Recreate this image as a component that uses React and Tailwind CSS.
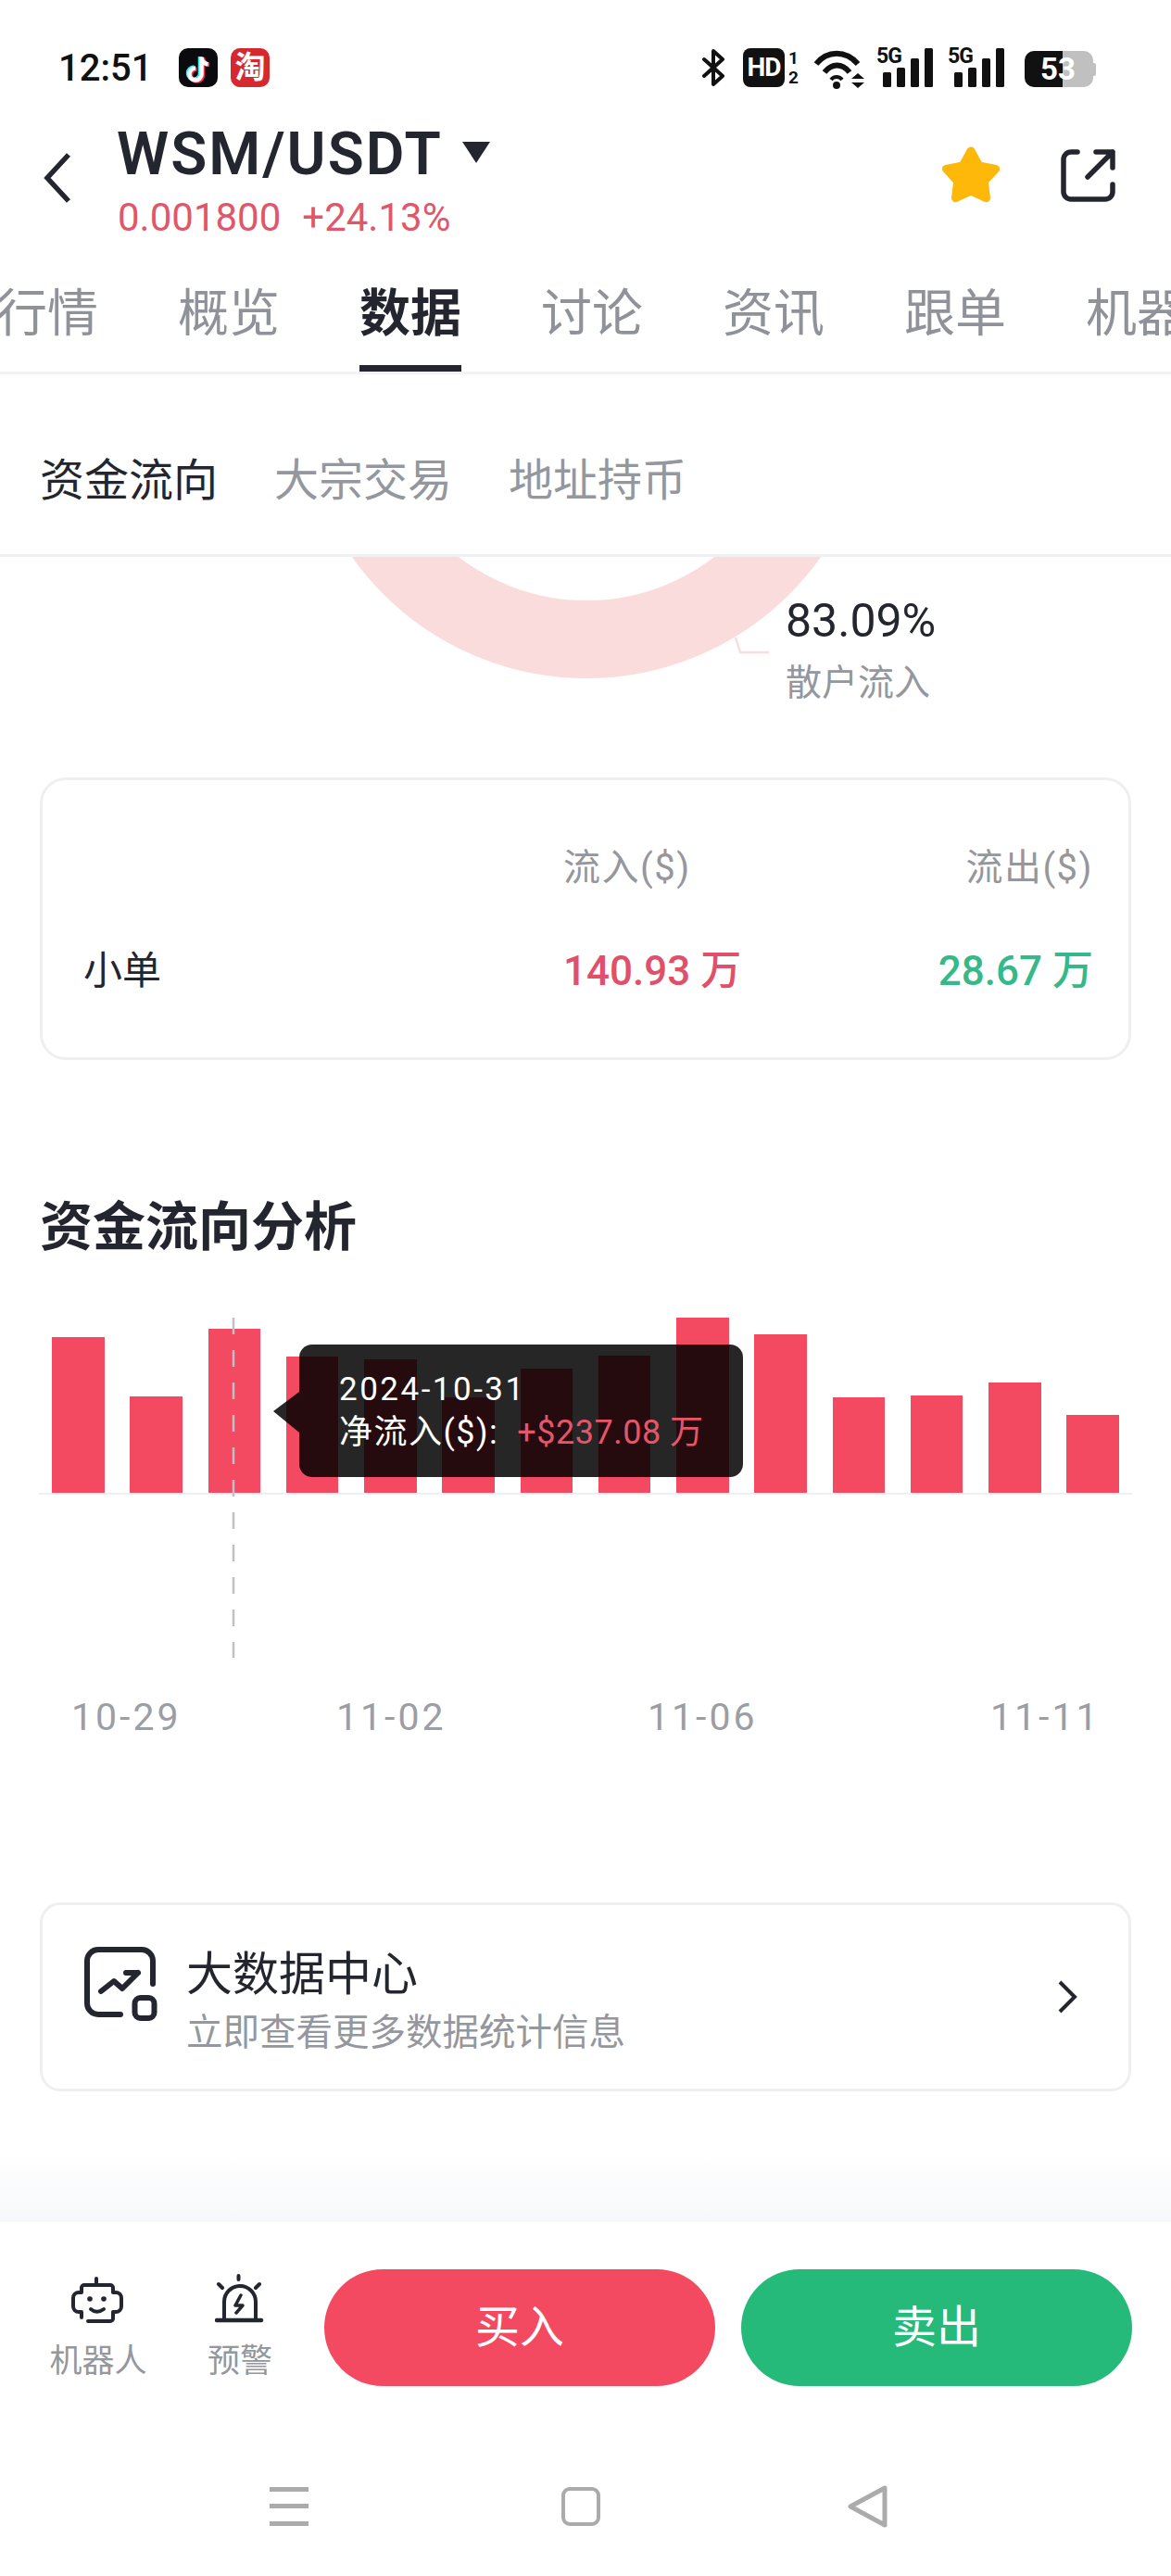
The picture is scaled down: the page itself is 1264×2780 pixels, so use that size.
import React from 'react';

const tabs = ['行情', '概览', '数据', '讨论', '资讯', '跟单', '机器人'];
const subTabs = ['资金流向', '大宗交易', '地址持币'];
// bar heights in px, read off the chart
const bars = [168, 104, 177, 147, 144, 103, 134, 148, 189, 171, 103, 105, 119, 84];

const Bluetooth = () => (
  <svg width="26" height="42" viewBox="0 0 26 42" fill="none" stroke="#111" strokeWidth="4" strokeLinejoin="round" strokeLinecap="round">
    <path d="M3 12 L23 30 L13 39 V3 L23 12 L3 30" />
  </svg>
);

const Wifi = () => (
  <svg width="58" height="46" viewBox="875 50 58 46" fill="none" stroke="#111" strokeWidth="6">
    <path d="M880 67 C892 52 912 52 925 67" />
    <path d="M889 76 C897 66 908 66 916 76" />
    <path d="M896 84 C899 80 905 80 908 84" strokeWidth="4" />
    <circle cx="902" cy="90" r="4" fill="#111" stroke="none" />
    <path d="M918 83 L925 77 L932 83 Z M918 87 L925 93 L932 87 Z" fill="#111" stroke="none" />
  </svg>
);

const Signal = () => (
  <div className="relative w-[62px] h-[43px]">
    <span className="absolute left-0 top-[-3px] text-[23px] leading-[24px] font-bold text-[#111] tracking-[-1px]">5G</span>
    <svg className="absolute left-0 top-0" width="62" height="43" viewBox="0 0 62 43" fill="#111">
      <rect x="7" y="26" width="9" height="16" rx="1.5" />
      <rect x="22" y="21" width="9" height="21" rx="1.5" />
      <rect x="37" y="11" width="9" height="31" rx="1.5" />
      <rect x="52" y="0" width="9" height="42" rx="1.5" />
    </svg>
  </div>
);

const TikTok = () => (
  <svg width="42" height="42" viewBox="0 0 42 42" fill="none" strokeWidth="4.5">
    <rect width="42" height="42" rx="10" fill="#0b0b0f" stroke="none" />
    <path d="M23 9 V27 a6.5 6.5 0 1 1 -6.5 -6.5 M23 9 c0 4 3 7.5 7 8" stroke="#25f4ee" />
    <path d="M26 10 V29 a6.5 6.5 0 1 1 -6.5 -6.5 M26 10 c0 4 3 7.5 7 8" stroke="#fe2c55" />
    <path d="M24.5 9.5 V28 a6.5 6.5 0 1 1 -6.5 -6.5 M24.5 9.5 c0 4 3 7.5 7 8" stroke="#fff" />
  </svg>
);

const Star = () => (
  <svg width="68" height="64" viewBox="0 0 68 64" fill="#fdb80a" stroke="#fdb80a" strokeWidth="9" strokeLinejoin="round">
    <polygon points="34,6 42.8,21.9 60.6,25.3 48.3,38.6 50.5,56.7 34,49 17.5,56.7 19.7,38.6 7.4,25.3 25.2,21.9" />
  </svg>
);

const Share = () => (
  <svg width="59" height="57" viewBox="0 0 59 57" fill="none" stroke="#23262e" strokeWidth="5.5" strokeLinecap="round" strokeLinejoin="round">
    <path d="M18 3 H11 a8 8 0 0 0 -8 8 V46 a8 8 0 0 0 8 8 H48 a8 8 0 0 0 8 -8 V38" />
    <path d="M38 3 H56 V20 M56 3 L29 30" />
  </svg>
);

const BigDataIcon = () => (
  <svg className="mb-[29px]" width="80" height="81" viewBox="0 0 80 81" fill="none" stroke="#23262e" strokeWidth="6" strokeLinecap="round" strokeLinejoin="round">
    <path d="M40 74 H16 a12 12 0 0 1 -12 -12 V16 a12 12 0 0 1 12 -12 H63 a12 12 0 0 1 12 12 V41" />
    <path d="M19 49 L33 38 L42 46 L59 29 M46 29 H59" />
    <rect x="55.5" y="56" width="21" height="22" rx="6" />
  </svg>
);

const Robot = () => (
  <svg width="62" height="56" viewBox="75 2452 62 56" fill="none" stroke="#23262e" strokeWidth="4" strokeLinecap="round" strokeLinejoin="round">
    <path d="M95 2503 H119 a3 3 0 0 0 3 -3 V2493 h3 a6 6 0 0 0 6 -6 V2478 a6 6 0 0 0 -6 -6 h-3 V2467 a3 3 0 0 0 -3 -3 H91 a3 3 0 0 0 -3 3 V2472 h-3 a6 6 0 0 0 -6 6 V2487 a6 6 0 0 0 6 6 h3 V2499" />
    <path d="M104 2457 V2463" />
    <circle cx="97" cy="2479" r="2.8" fill="#23262e" stroke="none" />
    <circle cx="112" cy="2479" r="2.8" fill="#23262e" stroke="none" />
    <path d="M98 2490 q 6.5 5.5 14 0" />
  </svg>
);

const Alarm = () => (
  <svg width="54" height="56" viewBox="233 2452 54 56" fill="none" stroke="#23262e" strokeWidth="4" strokeLinecap="round" strokeLinejoin="round">
    <path d="M243 2503 V2484 a17 17 0 0 1 34 0 V2503" />
    <path d="M235 2504 H283" strokeWidth="4.5" />
    <path d="M258.500 2456 V2460 M237 2465 L241 2469 M281 2465 L277 2469" />
    <path d="M261 2477 L255 2488 H263 L256 2496" strokeWidth="3.500" />
  </svg>
);

const App = () => {
  return (
    <div className="w-[1264px] h-[2780px] bg-white overflow-hidden font-['Roboto','Noto_Sans_CJK_SC',sans-serif] text-[#23262e]">
      {/* Status bar */}
      <div className="h-[120px] pt-[52px] flex items-start">
        <span className="ml-[63px] w-[130px] text-[40px] leading-[44px] font-medium text-[#111]">12:51</span>
        <TikTok />
        <div className="ml-[14px] w-[42px] h-[42px] rounded-[10px] bg-[#d6282f] flex items-center justify-center text-white text-[33px] leading-[42px] font-bold">淘</div>
        <div className="ml-[466px]"><Bluetooth /></div>
        <div className="ml-[19px] w-[45px] h-[42px] rounded-[8px] bg-[#111] flex items-center justify-center text-white text-[28px] leading-[42px] font-bold tracking-[-1px]">HD</div>
        <div className="ml-[4px] w-[12px] flex flex-col text-[19px] leading-[21px] font-bold text-[#111]">
          <span>1</span>
          <span>2</span>
        </div>
        <div className="ml-[13px]"><Wifi /></div>
        <div className="ml-[12px]"><Signal /></div>
        <div className="ml-[15px]"><Signal /></div>
        {/* Battery */}
        <div className="ml-[21px] mt-[3px] relative flex w-[78px] h-[39px]">
          <div className="w-[41px] h-full bg-[#111] rounded-l-[10px]" />
          <div className="w-[33px] h-full bg-[#c0c0c0] rounded-r-[10px]" />
          <div className="w-[3px] h-[14px] self-center bg-[#c0c0c0] rounded-r-[2px]" />
          <span className="absolute left-[17px] top-0 text-[33px] leading-[39px] font-bold text-white">53</span>
        </div>
      </div>

      {/* Header */}
      <div className="h-[150px] flex items-start">
        <svg className="ml-[47px] mt-[45px]" width="30" height="54" viewBox="0 0 30 54" fill="none" stroke="#23262e" strokeWidth="5.5">
          <path d="M27 2 L4 27 L27 52" />
        </svg>
        <div className="ml-[49px] mt-[15px]">
          <div className="flex items-center">
            <span className="text-[64px] leading-[64px] font-semibold tracking-[2px]">WSM/USDT</span>
            <svg className="ml-[20px] mb-[6px]" width="32" height="24" viewBox="0 0 32 24" fill="#23262e">
              <path d="M1 1 H31 L16 24 Z" />
            </svg>
          </div>
          <div className="mt-[11px] ml-[1px] flex gap-[23px] text-[42px] leading-[50px] text-[#e0566a]">
            <span>0.001800</span>
            <span>+24.13%</span>
          </div>
        </div>
        <div className="ml-auto mr-[60px] mt-[37px] flex gap-[63px] items-center">
          <Star />
          <Share />
        </div>
      </div>

      {/* Tabs */}
      <div className="h-[134px] border-b-[3px] border-[#f2f2f4] overflow-hidden flex gap-[86px] ml-[-4px] pt-[41px] text-[55px] leading-[55px] text-[#8f9399]">
        {tabs.map((tab) => (
          <div key={tab} className="flex flex-col shrink-0">
            <span className={tab === '数据' ? 'font-bold text-[#23262e]' : ''}>{tab}</span>
            <div className={tab === '数据' ? 'mt-[28px] h-[7px] bg-[#23262e]' : 'mt-[28px] h-[7px]'} />
          </div>
        ))}
      </div>

      {/* Sub tabs */}
      <div className="h-[197px] border-b-[3px] border-[#f0f0f2] pt-[91px] pl-[43px] flex gap-[61px] text-[48px] leading-[48px] text-[#94979d]">
        {subTabs.map((tab, i) => (
          <span key={tab} className={i === 0 ? 'text-[#23262e]' : ''}>{tab}</span>
        ))}
      </div>

      {/* Donut leftover */}
      <div className="relative h-[238px] overflow-hidden pl-[848px] pt-[45px]">
        <svg className="absolute left-0 top-0" width="1264" height="238" viewBox="0 601 1264 238" fill="none">
          <circle cx="633" cy="422" r="268" stroke="#fbdcdd" strokeWidth="84" />
          <path d="M794 688 L799 704 H830" stroke="#fbdcdd" strokeWidth="2.500" />
        </svg>
        <div className="relative text-[50px] leading-[48px]">83.09%</div>
        <div className="relative mt-[24px] text-[39px] leading-[39px] text-[#94979d]">散户流入</div>
      </div>

      {/* Small order table */}
      <div className="mx-[43px] h-[305px] border-[3px] border-[#eeeff1] rounded-[28px] pl-[44px] pr-[38px] pt-[75px]">
        <div className="grid grid-cols-[518px_1fr_1fr] text-[40px] leading-[40px] text-[#94979d] tracking-[1.500px]">
          <span />
          <span>流入($)</span>
          <span className="text-right">流出($)</span>
        </div>
        <div className="mt-[69px] grid grid-cols-[518px_1fr_1fr] items-center text-[44px] leading-[44px] font-medium">
          <span className="font-normal text-[42px]">小单</span>
          <span className="text-[#e0506a]">140.93 万</span>
          <span className="text-right text-[#36b98a]">28.67 万</span>
        </div>
      </div>

      <h2 className="mt-[153px] ml-[43px] text-[57px] leading-[56px] font-bold">资金流向分析</h2>

      {/* Chart */}
      <div className="relative mt-[69px]">
        <div className="mx-[42px] px-[14px] h-[191px] border-b-2 border-[#f0f0f3] flex items-end justify-between">
          {bars.map((h, i) => (
            <div key={i} className="w-[56.500px] bg-[#f34a61]" style={{ height: h }} />
          ))}
        </div>
        <svg className="absolute left-[250px] top-0" width="4" height="367" viewBox="0 0 4 367">
          <line x1="2" y1="0" x2="2" y2="367" stroke="#bfc0c8" strokeWidth="2.500" strokeDasharray="18 17" />
        </svg>
        <svg className="absolute left-[295px] top-[80px]" width="28" height="44" viewBox="0 0 28 44" fill="#000" fillOpacity="0.85">
          <path d="M28 0 L0 21 L28 44 Z" />
        </svg>
        <div className="absolute left-[323px] top-[29px] w-[479px] h-[143px] rounded-[14px] bg-black/85 pl-[43px] pt-[27px] text-white text-[35px] leading-[44px]">
          <div className="tracking-[2.500px]">2024-10-31</div>
          <div className="mt-[2px] flex text-[36px] tracking-[1.500px]">
            <span>净流入($):</span>
            <span className="ml-[20px] text-[#e5566b] tracking-[0.500px]">+$237.08 万</span>
          </div>
        </div>
      </div>

      {/* X labels */}
      <div className="mt-[220px] pl-[77px] flex text-[41px] leading-[41px] text-[#9a9ea5] tracking-[3px]">
        <span className="w-[286px]">10-29</span>
        <span className="w-[336px]">11-02</span>
        <span className="w-[370px]">11-06</span>
        <span>11-11</span>
      </div>

      {/* Big data entry */}
      <div className="mt-[179px] mx-[43px] h-[204px] border-[3px] border-[#eeeff1] rounded-[22px] flex items-center pl-[44px] pr-[55px]">
        <BigDataIcon />
        <div className="ml-[31px] mt-[10px]">
          <div className="text-[50px] leading-[56px]">大数据中心</div>
          <div className="mt-[12px] text-[39.500px] leading-[46px] text-[#94979d]">立即查看更多数据统计信息</div>
        </div>
        <svg className="ml-auto" width="22" height="36" viewBox="0 0 22 36" fill="none" stroke="#23262e" strokeWidth="4">
          <path d="M3 2 L19 18 L3 34" />
        </svg>
      </div>

      {/* Fade above bottom bar */}
      <div className="mt-[63px] h-[78px] bg-gradient-to-b from-white to-[#f7f8fb]" />

      {/* Bottom actions */}
      <div className="h-[262px] pt-[51px] pl-[44px] pr-[42px] flex items-start">
        <div className="w-[124px] pt-[5px] flex flex-col items-center text-[35px] leading-[40px] text-[#94979d]">
          <Robot />
          <span className="mt-[19px]">机器人</span>
        </div>
        <div className="ml-[48px] w-[86px] pt-[3px] flex flex-col items-center text-[35px] leading-[40px] text-[#94979d]">
          <Alarm />
          <span className="mt-[21px]">预警</span>
        </div>
        <button className="ml-[48px] w-[422px] h-[126px] rounded-full bg-[#f34a61] text-white text-[48px]">买入</button>
        <button className="ml-[28px] w-[422px] h-[126px] rounded-full bg-[#25ba7a] text-white text-[48px]">卖出</button>
      </div>

      {/* System nav */}
      <div className="mt-[21px] pl-[291px] flex items-center">
        <svg width="42" height="42" viewBox="0 0 42 42" fill="#ababab">
          <rect y="0" width="42" height="5" />
          <rect y="18" width="42" height="5" />
          <rect y="37" width="42" height="5" />
        </svg>
        <div className="ml-[273px] w-[42px] h-[42px] border-[4px] border-[#ababab] rounded-[9px]" />
        <svg className="ml-[267px]" width="44" height="48" viewBox="0 0 44 48" fill="none" stroke="#ababab" strokeWidth="5" strokeLinejoin="round">
          <path d="M40 4 V44 L3 24 Z" />
        </svg>
      </div>
    </div>
  );
};

export default App;
